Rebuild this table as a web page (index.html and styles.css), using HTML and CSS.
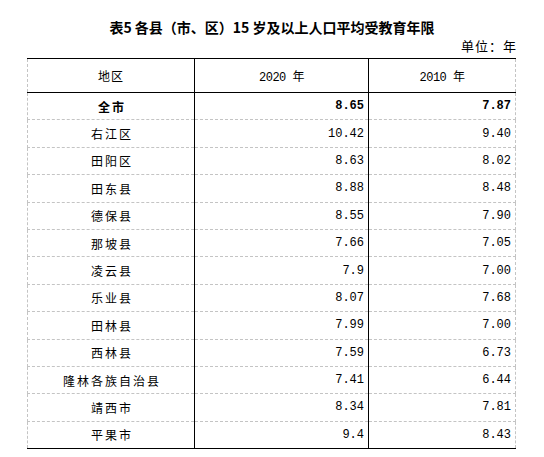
FILE: index.html
```html
<!DOCTYPE html>
<html lang="zh-CN">
<head>
  <meta charset="UTF-8" />
  <title>各县（市、区）15岁及以上人口平均受教育年限</title>
  <link rel="stylesheet" href="styles.css">
</head>
<body>
  <h1 class="title">表5 各县（市、区）15 岁及以上人口平均受教育年限</h1>
  <div class="unit">单位：年</div>

  <table class="data">
    <thead>
      <tr>
        <th class="area">地区</th>
        <th class="year">2020 年</th>
        <th class="year">2010 年</th>
      </tr>
    </thead>
    <tbody>
      <tr class="total">
        <td class="area">全市</td>
        <td class="num">8.65</td>
        <td class="num">7.87</td>
      </tr>
      <tr><td class="area">右江区</td><td class="num">10.42</td><td class="num">9.40</td></tr>
      <tr><td class="area">田阳区</td><td class="num">8.63</td><td class="num">8.02</td></tr>
      <tr><td class="area">田东县</td><td class="num">8.88</td><td class="num">8.48</td></tr>
      <tr><td class="area">德保县</td><td class="num">8.55</td><td class="num">7.90</td></tr>
      <tr><td class="area">那坡县</td><td class="num">7.66</td><td class="num">7.05</td></tr>
      <tr><td class="area">凌云县</td><td class="num">7.9</td><td class="num">7.00</td></tr>
      <tr><td class="area">乐业县</td><td class="num">8.07</td><td class="num">7.68</td></tr>
      <tr><td class="area">田林县</td><td class="num">7.99</td><td class="num">7.00</td></tr>
      <tr><td class="area">西林县</td><td class="num">7.59</td><td class="num">6.73</td></tr>
      <tr><td class="area">隆林各族自治县</td><td class="num">7.41</td><td class="num">6.44</td></tr>
      <tr><td class="area">靖西市</td><td class="num">8.34</td><td class="num">7.81</td></tr>
      <tr><td class="area">平果市</td><td class="num">9.4</td><td class="num">8.43</td></tr>
    </tbody>
  </table>
</body>
</html>
```

FILE: styles.css
```css
body {
  margin: 0;
  width: 544px;
  background: #fff;
  color: #000;
  font-family: "Noto Sans CJK SC", "Liberation Sans", sans-serif;
}

.title {
  margin: 17px 0 0;
  font-size: 14px;
  line-height: 20px;
  font-weight: bold;
  text-align: center;
}

.unit {
  margin: 1px 27px 4px 0;
  font-size: 13px;
  line-height: 16px;
  letter-spacing: 1px;
  text-align: right;
}

.data {
  margin-left: 27px;
  width: 489px;
  border-collapse: collapse;
  table-layout: fixed;
  font-size: 12px;
}

.data th,
.data td {
  padding: 0;
  border-left: 1px solid #000;
  border-right: 1px solid #000;
  border-bottom: 1px dashed #c4c4c4;
}

.data th:first-child,
.data td:first-child {
  border-left: 1px dashed #c4c4c4;
}

.data th:last-child,
.data td:last-child {
  border-right: 1px dashed #c4c4c4;
}

.data thead tr {
  height: 34px;
}

.data thead th {
  border-top: 1px solid #000;
  border-bottom: 1px solid #000;
  font-weight: normal;
}

.data th.area {
  width: 166px;
  letter-spacing: 1px;
}

.data th:nth-child(2) {
  width: 173px;
}

.data th.year {
  font-family: "Liberation Mono", "Noto Sans CJK SC", monospace;
  letter-spacing: -0.5px;
}

.data tbody tr {
  height: 27.4px;
}

.data tbody tr:last-child td {
  border-bottom: 1px solid #000;
}

.data td.area {
  text-align: center;
  letter-spacing: 2px;
  padding-left: 2px;
}

.data td.num {
  text-align: right;
  padding-right: 4px;
  font-family: "Liberation Mono", monospace;
}

.total td {
  font-weight: bold;
}
```
